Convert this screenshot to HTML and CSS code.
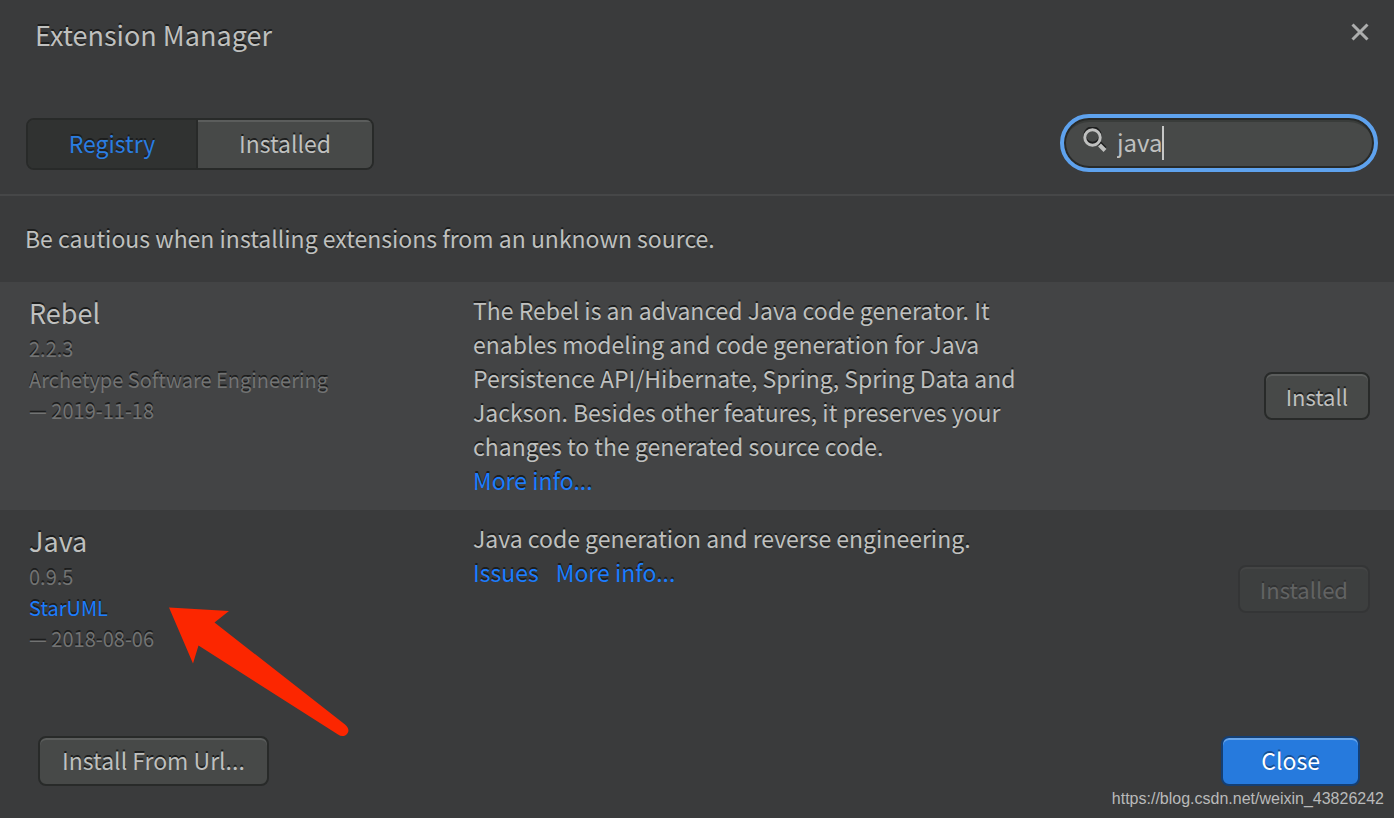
FILE: index.html
```html
<!DOCTYPE html>
<html lang="en">
<head>
<meta charset="utf-8">
<meta name="viewport" content="width=device-width, initial-scale=1">
<title>Extension Manager</title>
<link rel="stylesheet" href="styles.css">
</head>
<body>
<main class="dialog">
  <header class="dialog-header">
    <h1 class="dialog-title">Extension Manager</h1>
    <button class="dismiss" type="button" aria-label="Dismiss">
      <svg width="18" height="18" viewBox="0 0 18 18"><path d="M1.5 1.5 16.5 16.5M16.5 1.5 1.5 16.5" fill="none" stroke="currentColor" stroke-width="3"/></svg>
    </button>
  </header>

  <div class="toolbar">
    <div class="tabs">
      <button class="tab tab-active" type="button" aria-pressed="true">Registry</button>
      <button class="tab" type="button" aria-pressed="false">Installed</button>
    </div>
    <label class="search">
      <svg class="search-icon" width="24" height="26" viewBox="0 0 24 26" aria-hidden="true">
        <g class="search-shade"><circle cx="9.5" cy="8.5" r="7.7"/><path class="search-handle" d="M16.500 16 22 21.500"/></g>
        <g class="search-glass"><circle cx="9.5" cy="10.500" r="7.7"/><path class="search-handle" d="M16.500 18 22 23.500"/></g>
      </svg>
      <input class="search-input" type="text" value="java" aria-label="Search extensions">
      <span class="caret"></span>
    </label>
  </div>

  <p class="notice">Be cautious when installing extensions from an unknown source.</p>

  <ul class="extensions">
    <li class="extension extension-shaded">
      <div class="about">
        <h2 class="name">Rebel</h2>
        <div class="version">2.2.3</div>
        <div class="author">Archetype Software Engineering</div>
        <div class="date">— 2019-11-18</div>
      </div>
      <div class="details">
        <p class="description">The Rebel is an advanced Java code generator. It enables modeling and code generation for Java Persistence API/Hibernate, Spring, Spring Data and Jackson. Besides other features, it preserves your changes to the generated source code.</p>
        <div class="links"><a href="#rebel">More info...</a></div>
      </div>
      <button class="button button-small" type="button">Install</button>
    </li>
    <li class="extension">
      <div class="about">
        <h2 class="name">Java</h2>
        <div class="version">0.9.5</div>
        <div class="author"><a href="#staruml">StarUML</a></div>
        <div class="date">— 2018-08-06</div>
      </div>
      <div class="details">
        <p class="description">Java code generation and reverse engineering.</p>
        <div class="links"><a href="#issues">Issues</a><a href="#java">More info...</a></div>
      </div>
      <button class="button button-small" type="button" disabled>Installed</button>
    </li>
  </ul>

  <footer class="dialog-footer">
    <button class="button" type="button">Install From Url...</button>
    <button class="button button-primary" type="button">Close</button>
  </footer>

  <svg class="pointer" width="184" height="132" viewBox="0 0 184 132" aria-hidden="true">
    <path d="M1 0.500 61 4 46.500 15.500 177 117.500C181 121 181.500 125 178.500 127.500C176 129.500 173 129.500 170 127.500L30.500 38.500 25 56.500Z" fill="#fc2600"/>
  </svg>
  <div class="watermark">https://blog.csdn.net/weixin_43826242</div>
</main>
</body>
</html>
```
FILE: styles.css
```css
* {
  box-sizing: border-box;
}

body {
  margin: 0;
  background: #3a3b3c;
  color: #bfc0bf;
  font-family: "Noto Sans CJK SC", "Noto Sans", sans-serif;
  font-size: 23px;
  line-height: 34px;
  text-shadow: 0 -2px 0 #1c1d1d;
}

h1, h2, p, ul {
  margin: 0;
  padding: 0;
  font-weight: 400;
}

button, input {
  font: inherit;
  color: inherit;
  text-shadow: inherit;
}

a {
  color: #1b7dff;
  text-decoration: none;
}

.dialog {
  position: relative;
  display: flex;
  flex-direction: column;
  min-height: 100vh;
}

.dialog-header {
  display: flex;
  justify-content: space-between;
  align-items: flex-start;
  padding: 17px 24px 0 35px;
}

.dialog-title {
  font-size: 27px;
  line-height: 36px;
}

.dismiss {
  display: flex;
  margin-top: 5px;
  padding: 1px;
  border: 0;
  background: none;
  color: #adaeae;
}

.toolbar {
  display: flex;
  justify-content: space-between;
  align-items: center;
  padding: 61px 16px 22px 26px;
  border-bottom: 2px solid #464748;
}

.tabs {
  display: flex;
  margin-top: 2px;
  border: 2px solid #282a29;
  border-radius: 8px;
  overflow: hidden;
}

.tab {
  width: 174px;
  height: 48px;
  padding: 0 0 3px;
  border: 0;
  background: #474948;
  box-shadow: inset 0 2px #5b5d5c;
}

.tab-active {
  width: 170px;
  border-right: 2px solid #282a29;
  background: #303231;
  color: #2a7de1;
  box-shadow: none;
}

.search {
  display: flex;
  align-items: center;
  width: 318px;
  height: 58px;
  padding: 0 19px;
  border: 4px solid #5ea2ee;
  border-radius: 29px;
  background: #474948;
  box-shadow: inset 0 0 0 2px #282a29, inset 0 4px #393c3a;
}

.search-icon {
  flex: none;
  margin-right: 10px;
  margin-bottom: 6px;
  fill: none;
  stroke-width: 3;
}

.search-shade {
  stroke: #1c1d1d;
}

.search-glass {
  stroke: #bfc0bf;
}

.search-handle {
  stroke-width: 4;
}

.search-input {
  width: 45px;
  height: 34px;
  padding: 0 0 2px;
  border: 0;
  outline: 0;
  background: none;
  font-size: 24px;
  text-shadow: none;
  field-sizing: content;
}

.caret {
  width: 2px;
  height: 34px;
  background: #c6c7c6;
}

.notice {
  padding: 25px 25px 27px;
}

.extensions {
  flex: 1;
  list-style: none;
}

.extension {
  display: grid;
  grid-template-columns: 414px minmax(0, 564px) 1fr;
  column-gap: 30px;
  align-items: start;
  padding: 11px 24px 13px 29px;
}

.extension-shaded {
  background: #434445;
}

.name {
  font-size: 27px;
  line-height: 40px;
}

.version, .author, .date {
  color: #727373;
  font-size: 20px;
  line-height: 31px;
}

.links {
  display: flex;
  gap: 17px;
}

.button {
  height: 50px;
  padding: 0 22px 2px;
  border: 2px solid #282a29;
  border-radius: 8px;
  background: #474948;
  box-shadow: inset 0 2px #5b5d5c;
}

.button-small {
  align-self: center;
  justify-self: end;
  height: 48px;
  margin-top: 2px;
  padding: 0 20px;
  font-size: 22px;
}

.button:disabled {
  opacity: 0.3;
}

.button-primary {
  padding: 0 38px 2px;
  border-color: #143f74;
  background: #267add;
  color: #ffffff;
  box-shadow: inset 0 2px #6aa6ea;
  text-shadow: 0 -2px 0 #174f92;
}

.dialog-footer {
  display: flex;
  justify-content: space-between;
  padding: 0 34px 32px 38px;
}

.pointer {
  position: absolute;
  left: 168px;
  top: 607px;
}

.watermark {
  position: absolute;
  right: 10px;
  bottom: 9px;
  color: #b9baba;
  font-family: "Liberation Sans", Arial, sans-serif;
  font-size: 16px;
  line-height: 20px;
  text-shadow: none;
}
```
